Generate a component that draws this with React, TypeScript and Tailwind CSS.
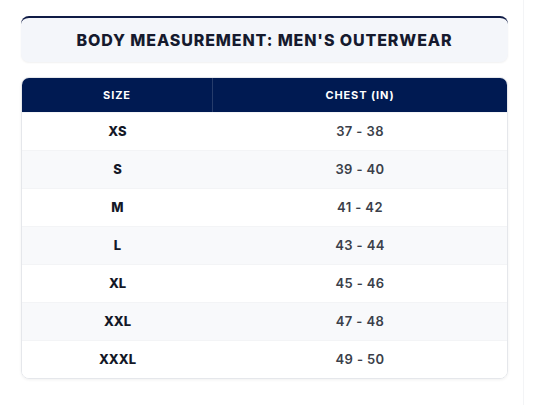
const rows = [
  ["XS", "37 - 38"],
  ["S", "39 - 40"],
  ["M", "41 - 42"],
  ["L", "43 - 44"],
  ["XL", "45 - 46"],
  ["XXL", "47 - 48"],
  ["XXXL", "49 - 50"],
]

export default function App() {
  return (
    <div className="min-h-screen w-[524px] bg-white border-r border-gray-100 font-['Inter',sans-serif]">
      <div className="pl-[21px] pr-[15px] pt-4">
        {/* Title */}
        <div className="h-[46px] rounded-lg border-t-2 border-[#0f1b45] bg-[#f4f6fa] shadow-[0_1px_2px_rgba(0,0,0,0.06)] flex items-center justify-center">
          <h1 className="text-[16px] font-extrabold tracking-[0.055em] text-[#161a2e]">
            BODY MEASUREMENT: MEN'S OUTERWEAR
          </h1>
        </div>

        {/* Table */}
        <div className="mt-[15px] rounded-lg border border-gray-200 overflow-hidden shadow-[0_1px_3px_rgba(0,0,0,0.06)]">
          <div className="grid grid-cols-[191px_1fr] h-[34px] bg-[#001a52] text-white text-[11px] font-bold tracking-[0.08em]">
            <div className="flex items-center justify-center border-r border-white/15">SIZE</div>
            <div className="flex items-center justify-center">CHEST (IN)</div>
          </div>
          {rows.map(([size, chest], i) => (
            <div
              key={size}
              className={`grid grid-cols-[191px_1fr] h-[38px] text-[13px] border-t border-gray-100 ${i % 2 ? "bg-[#f8f9fb]" : "bg-white"}`}
            >
              <div className="flex items-center justify-center font-extrabold text-[#141827]">{size}</div>
              <div className="flex items-center justify-center font-semibold text-[#3b3f4a] tracking-[0.03em]">{chest}</div>
            </div>
          ))}
        </div>
      </div>
    </div>
  )
}
